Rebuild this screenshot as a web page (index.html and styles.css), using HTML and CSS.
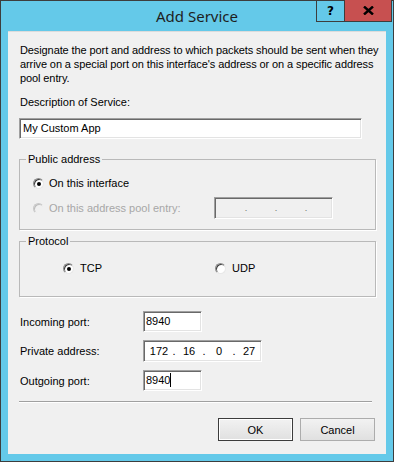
FILE: index.html
```html
<!DOCTYPE html>
<html lang="en">
<head>
    <meta charset="UTF-8">
    <title>Add Service</title>
    <link rel="stylesheet" href="styles.css">
</head>
<body>

<div class="window">
    <div class="titlebar">
        <span></span>
        <span class="title">Add Service</span>
        <div class="controls">
            <span class="ctl help">?</span>
            <span class="ctl close">
                <svg width="11" height="9" viewBox="0 0 11 9"><path d="M1 0.5 L10 8.5 M10 0.5 L1 8.5" stroke="#000" stroke-width="2.4"/></svg>
            </span>
        </div>
    </div>

    <div class="client">
        <p class="intro">Designate the port and address to which packets should be sent when they arrive on a special port on this interface's address or on a specific address pool entry.</p>

        <p class="label">Description of Service:</p>
        <div class="field wide">My Custom App</div>

        <fieldset class="group public">
            <legend>Public address</legend>
            <div class="opt-row">
                <span class="radio checked"></span>
                <span>On this interface</span>
            </div>
            <div class="opt-row second">
                <span class="radio disabled"></span>
                <span class="muted">On this address pool entry:</span>
                <div class="field ip disabled">
                    <span class="oct"></span><span class="dot">.</span>
                    <span class="oct"></span><span class="dot">.</span>
                    <span class="oct"></span><span class="dot">.</span>
                    <span class="oct"></span>
                </div>
            </div>
        </fieldset>

        <fieldset class="group protocol">
            <legend>Protocol</legend>
            <div class="proto-row">
                <div class="proto">
                    <span class="radio checked"></span>
                    <span>TCP</span>
                </div>
                <div class="proto">
                    <span class="radio"></span>
                    <span>UDP</span>
                </div>
            </div>
        </fieldset>

        <div class="form-row first">
            <span class="row-label">Incoming port:</span>
            <div class="field port">8940</div>
        </div>
        <div class="form-row">
            <span class="row-label">Private address:</span>
            <div class="field ip addr">
                <span class="oct">172</span><span class="dot">.</span>
                <span class="oct">16</span><span class="dot">.</span>
                <span class="oct">0</span><span class="dot">.</span>
                <span class="oct">27</span>
            </div>
        </div>
        <div class="form-row">
            <span class="row-label">Outgoing port:</span>
            <div class="field port">8940<span class="caret"></span></div>
        </div>

        <hr class="sep">

        <div class="buttons">
            <button class="btn default">OK</button>
            <button class="btn">Cancel</button>
        </div>
    </div>
</div>

</body>
</html>
```

FILE: styles.css
```css
body {
    margin: 0;
    font-family: "Liberation Sans", Arial, sans-serif;
    font-size: 11px;
    color: #000;
    background: #fff;
}
.window {
    box-sizing: border-box;
    width: 394px;
    height: 462px;
    border: 1px solid #3d3d3d;
    background: #64c9e9;
    padding: 0 7px 7px 7px;
    display: flex;
    flex-direction: column;
}
.titlebar {
    height: 30px;
    display: grid;
    grid-template-columns: 1fr auto 1fr;
    align-items: start;
}
.title {
    font-family: "Noto Sans", "Liberation Sans", sans-serif;
    font-size: 15px;
    line-height: 30px;
    color: #1e1e1e;
}
.controls {
    justify-self: end;
    display: flex;
    margin-right: -6px;
    margin-top: -1px;
    border: 1px solid #3d3d3d;
    border-top: none;
    height: 21px;
}
.ctl {
    display: flex;
    align-items: center;
    justify-content: center;
}
.help {
    width: 27px;
    border-right: 1px solid #3d3d3d;
    font-weight: bold;
    font-size: 12px;
    font-family: "DejaVu Sans", sans-serif;
}
.close {
    width: 46px;
    background: #c75050;
}
.client {
    flex: 1;
    background: #f0f0f0;
    padding: 11px 11px 0 11px;
    border-top: 1px solid #dcdcdc;
}
.intro {
    margin: 0 -8px 0 1px;
    line-height: 14px;
    letter-spacing: -0.1px;
}
.label {
    margin: 10px 0 0 1px;
    line-height: 14px;
}
.field {
    box-sizing: border-box;
    background: #fff;
    border: 1px solid;
    border-color: #a0a0a0 #fff #fff #a0a0a0;
    box-shadow: inset 1px 1px 0 #696969, inset -1px -1px 0 #e3e3e3;
    line-height: 17px;
    padding: 0 3px;
}
.wide {
    width: 343px;
    height: 21px;
    margin-top: 9px;
    padding-top: 1px;
}
.group {
    margin: 0;
    border: 1px solid #b9b9b9;
    box-shadow: 1px 1px 0 #fff;
    min-width: 0;
    box-sizing: border-box;
}
.group legend {
    line-height: 14px;
    padding: 0 2px;
    margin-left: 6px;
}
.public {
    margin-top: 13px;
    padding: 10px 0 10px 0;
    width: 357px;
}
.opt-row {
    display: flex;
    align-items: center;
    height: 14px;
    gap: 5px;
    margin-left: 13px;
}
.opt-row.second {
    height: 22px;
    margin-top: 7px;
}
.muted {
    color: #a7a7a7;
    width: 160px;
}
.ip {
    width: 119px;
    height: 22px;
    display: flex;
    align-items: center;
    padding: 0 0 0 6px;
}
.ip .oct {
    width: 20px;
    text-align: center;
}
.ip .dot {
    width: 10px;
    text-align: center;
}
.field.disabled {
    background: #f0f0f0;
    color: #6d6d6d;
    font-size: 9px;
}
.addr {
    padding: 1px 0 0 5px;
}
.radio {
    box-sizing: border-box;
    width: 11px;
    height: 11px;
    border-radius: 50%;
    border: 1px solid #8d8d8d;
    border-right-color: #e8e8e8;
    border-bottom-color: #e8e8e8;
    background: #fff;
    box-shadow: inset 1px 1px 0 #404040;
    display: flex;
    align-items: center;
    justify-content: center;
}
.radio.checked::after {
    content: "";
    width: 4px;
    height: 4px;
    border-radius: 50%;
    background: #000;
    margin: 1px 0 0 1px;
}
.radio.disabled {
    background: #f0f0f0;
    border-color: #c8c8c8 #f0f0f0 #f0f0f0 #c8c8c8;
    box-shadow: inset 1px 1px 0 #bdbdbd;
}
.protocol {
    margin-top: 4px;
    padding: 13px 0 21px 0;
    width: 357px;
}
.proto-row {
    display: flex;
    height: 14px;
    margin-left: 43px;
}
.proto {
    display: flex;
    align-items: center;
    gap: 6px;
    width: 152px;
}
.form-row {
    display: flex;
    align-items: center;
    margin-top: 8px;
}
.form-row.first {
    margin-top: 14px;
}
.row-label {
    width: 123px;
    margin-left: 1px;
}
.port {
    width: 59px;
    height: 21px;
    padding: 1px 2px 0;
}
.caret {
    display: inline-block;
    width: 1px;
    height: 14px;
    background: #000;
    vertical-align: -3px;
}
.sep {
    margin: 10px 3px 0 0;
    border: none;
    border-top: 1px solid #a0a0a0;
    border-bottom: 1px solid #fff;
}
.buttons {
    display: flex;
    justify-content: flex-end;
    gap: 7px;
    margin-top: 15px;
}
.btn {
    box-sizing: border-box;
    width: 75px;
    height: 23px;
    font-family: "Liberation Sans", Arial, sans-serif;
    font-size: 11px;
    color: #000;
    background: linear-gradient(to bottom, #f2f2f2, #e0e0e0);
    border: 1px solid #acacac;
    padding: 0;
}
.btn.default {
    border-color: #3c3c3c;
    box-shadow: inset 0 0 0 1px #fff;
}
```
